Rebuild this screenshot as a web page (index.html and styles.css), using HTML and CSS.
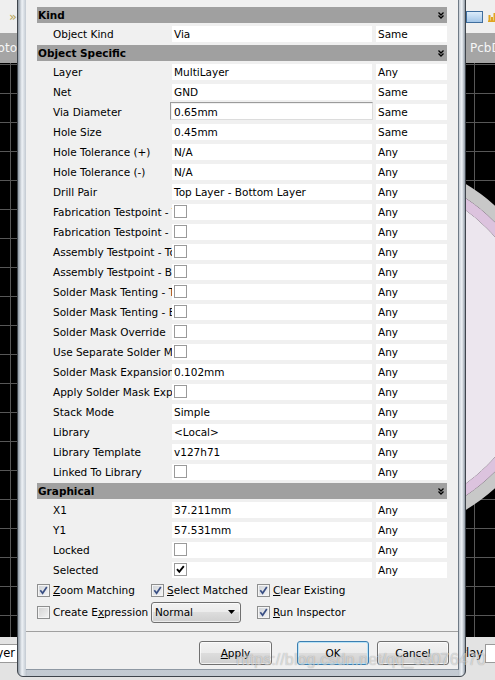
FILE: index.html
```html
<!DOCTYPE html>
<html>
<head>
<meta charset="utf-8">
<title>Via properties</title>
<link rel="stylesheet" href="styles.css">
</head>
<body>
<div class="desktop">
  <div class="app">
    <div class="toolbar">
      <span class="tb-more">»</span>
      <span class="tb-right">
        <span class="tb-btn"></span>
        <svg class="tb-grid" width="10" height="10" viewBox="0 0 10 10"><path d="M0 9.5H10M1.5 9V3M4 9V5M6.5 9V1M9 9V4" stroke="#e0a420" stroke-width="2" fill="none"/></svg>
      </span>
    </div>
    <div class="tabbar">
      <div class="tab-left"><span>Photo</span></div>
      <span class="tab-right">PcbDoc</span>
    </div>
    <div class="canvas">
      <svg class="ring" width="30" height="574" viewBox="0 0 30 574">
        <circle cx="-97" cy="284" r="184" fill="none" stroke="#c8c8c8" stroke-width="12"/>
        <circle cx="-97" cy="284" r="173" fill="none" stroke="#dcc3de" stroke-width="10"/>
        <circle cx="-97" cy="284" r="168" fill="#ece6ee"/>
      </svg>
    </div>
    <div class="statusbar">
      <div class="st-left"><span class="st-tab">Layer</span></div>
      <div class="st-right"><span class="st-text">Overlay</span><span class="st-tab2"></span></div>
    </div>
  </div>

  <div class="dialog">
    <div class="client">
      <div class="props">
        <div class="hdr hdr-first"><span>Kind</span><svg class="chev" width="6" height="7" viewBox="0 0 6 7"><path d="M0.5 0.5L3 3L5.5 0.5M0.5 3.5L3 6L5.5 3.5" fill="none" stroke="#000" stroke-width="1.3"/></svg></div>
        <div class="row"><span class="nm">Object Kind</span><span class="val">Via</span><span class="cmp">Same</span></div>
        <div class="hdr"><span>Object Specific</span><svg class="chev" width="6" height="7" viewBox="0 0 6 7"><path d="M0.5 0.5L3 3L5.5 0.5M0.5 3.5L3 6L5.5 3.5" fill="none" stroke="#000" stroke-width="1.3"/></svg></div>
        <div class="row"><span class="nm">Layer</span><span class="val">MultiLayer</span><span class="cmp">Any</span></div>
        <div class="row"><span class="nm">Net</span><span class="val">GND</span><span class="cmp">Same</span></div>
        <div class="row"><span class="nm">Via Diameter</span><span class="val edit">0.65mm</span><span class="cmp">Same</span></div>
        <div class="row"><span class="nm">Hole Size</span><span class="val">0.45mm</span><span class="cmp">Same</span></div>
        <div class="row"><span class="nm">Hole Tolerance (+)</span><span class="val">N/A</span><span class="cmp">Any</span></div>
        <div class="row"><span class="nm">Hole Tolerance (-)</span><span class="val">N/A</span><span class="cmp">Any</span></div>
        <div class="row"><span class="nm">Drill Pair</span><span class="val">Top Layer - Bottom Layer</span><span class="cmp">Any</span></div>
        <div class="row"><span class="nm">Fabrication Testpoint - Top</span><span class="val ck"><span class="gcb"></span></span><span class="cmp">Any</span></div>
        <div class="row"><span class="nm">Fabrication Testpoint - Bottom</span><span class="val ck"><span class="gcb"></span></span><span class="cmp">Any</span></div>
        <div class="row"><span class="nm">Assembly Testpoint - Top</span><span class="val ck"><span class="gcb"></span></span><span class="cmp">Any</span></div>
        <div class="row"><span class="nm">Assembly Testpoint - Bottom</span><span class="val ck"><span class="gcb"></span></span><span class="cmp">Any</span></div>
        <div class="row"><span class="nm">Solder Mask Tenting - Top</span><span class="val ck"><span class="gcb"></span></span><span class="cmp">Any</span></div>
        <div class="row"><span class="nm">Solder Mask Tenting - Bottom</span><span class="val ck"><span class="gcb"></span></span><span class="cmp">Any</span></div>
        <div class="row"><span class="nm">Solder Mask Override</span><span class="val ck"><span class="gcb"></span></span><span class="cmp">Any</span></div>
        <div class="row"><span class="nm">Use Separate Solder Mask Expansion</span><span class="val ck"><span class="gcb"></span></span><span class="cmp">Any</span></div>
        <div class="row"><span class="nm">Solder Mask Expansion</span><span class="val">0.102mm</span><span class="cmp">Any</span></div>
        <div class="row"><span class="nm">Apply Solder Mask Expansion</span><span class="val ck"><span class="gcb"></span></span><span class="cmp">Any</span></div>
        <div class="row"><span class="nm">Stack Mode</span><span class="val">Simple</span><span class="cmp">Any</span></div>
        <div class="row"><span class="nm">Library</span><span class="val">&lt;Local&gt;</span><span class="cmp">Any</span></div>
        <div class="row"><span class="nm">Library Template</span><span class="val">v127h71</span><span class="cmp">Any</span></div>
        <div class="row"><span class="nm">Linked To Library</span><span class="val ck"><span class="gcb"></span></span><span class="cmp">Any</span></div>
        <div class="hdr"><span>Graphical</span><svg class="chev" width="6" height="7" viewBox="0 0 6 7"><path d="M0.5 0.5L3 3L5.5 0.5M0.5 3.5L3 6L5.5 3.5" fill="none" stroke="#000" stroke-width="1.3"/></svg></div>
        <div class="row"><span class="nm">X1</span><span class="val">37.211mm</span><span class="cmp">Any</span></div>
        <div class="row"><span class="nm">Y1</span><span class="val">57.531mm</span><span class="cmp">Any</span></div>
        <div class="row"><span class="nm">Locked</span><span class="val ck"><span class="gcb"></span></span><span class="cmp">Any</span></div>
        <div class="row"><span class="nm">Selected</span><span class="val ck"><span class="gcb"><svg width="11" height="11" viewBox="0 0 11 11"><path d="M2 5.2L4.3 7.8L8.8 2.2" fill="none" stroke="#000" stroke-width="1.9"/></svg></span></span><span class="cmp">Any</span></div>
      </div>

      <div class="opts">
        <label class="opt"><span class="cbx"><svg width="11" height="11" viewBox="0 0 11 11"><path d="M2.3 5.3L4.6 8.2L8.8 2" fill="none" stroke="#3a4f84" stroke-width="1.7"/></svg></span><span><u>Z</u>oom Matching</span></label>
        <label class="opt"><span class="cbx"><svg width="11" height="11" viewBox="0 0 11 11"><path d="M2.3 5.3L4.6 8.2L8.8 2" fill="none" stroke="#3a4f84" stroke-width="1.7"/></svg></span><span><u>S</u>elect Matched</span></label>
        <label class="opt"><span class="cbx"><svg width="11" height="11" viewBox="0 0 11 11"><path d="M2.3 5.3L4.6 8.2L8.8 2" fill="none" stroke="#3a4f84" stroke-width="1.7"/></svg></span><span><u>C</u>lear Existing</span></label>
        <label class="opt"><span class="cbx off"></span><span>Create E<u>x</u>pression</span></label>
        <div class="dd"><span>Normal</span><svg width="7" height="4" viewBox="0 0 7 4"><path d="M0 0H7L3.5 4Z" fill="#000"/></svg></div>
        <label class="opt"><span class="cbx"><svg width="11" height="11" viewBox="0 0 11 11"><path d="M2.3 5.3L4.6 8.2L8.8 2" fill="none" stroke="#3a4f84" stroke-width="1.7"/></svg></span><span><u>R</u>un Inspector</span></label>
      </div>

      <div class="sep"></div>

      <div class="btns">
        <span class="btn btn-apply"><u>A</u>pply</span>
        <span class="btn btn-default">OK</span>
        <span class="btn">Cancel</span>
      </div>
    </div>
  </div>

  <div class="watermark">https://blog.csdn.net/qq_53076470</div>
</div>
</body>
</html>
```

FILE: styles.css
```css
* { box-sizing: border-box; }
html, body { margin: 0; padding: 0; }
body {
  width: 495px;
  height: 680px;
  overflow: hidden;
  font-family: "DejaVu Sans", "Liberation Sans", sans-serif;
  font-size: 10.5px;
  color: #000;
  background: #000;
}
.desktop { position: relative; width: 495px; height: 680px; overflow: hidden; }

/* ---------- application behind the dialog ---------- */
.app { display: flex; flex-direction: column; height: 100%; }
.toolbar {
  height: 33px;
  background: #efefef;
  display: flex;
  align-items: center;
  justify-content: space-between;
}
.tb-more { margin-left: 9px; color: #b8a65a; font-size: 13px; }
.tb-right { display: flex; align-items: center; gap: 5px; margin-right: -3px; }
.tb-btn {
  width: 17px; height: 12px;
  border: 1px solid #3f6e9e;
  background: linear-gradient(#dcecfa, #a3c6e8);
}
.tabbar {
  height: 30px;
  background: #a5a5a5;
  color: #f6f6f6;
  font-size: 12px;
  display: flex;
  align-items: center;
  justify-content: space-between;
}
.tab-left { width: 17px; display: flex; justify-content: flex-end; overflow: hidden; white-space: nowrap; }
.tab-right { width: 27px; overflow: hidden; white-space: nowrap; padding-left: 2px; }
.canvas {
  flex: 1;
  position: relative;
  overflow: hidden;
  background-color: #000;
  background-image:
    linear-gradient(to right, #575757 1px, transparent 1px),
    linear-gradient(#575757 1px, transparent 1px);
  background-size: 29px 29px;
  background-position: 10px 1px;
}
.ring {
  position: absolute;
  left: 465px;
  top: 0;
  display: block;
}
.statusbar {
  height: 43px;
  background: #e3e3e3;
  display: flex;
  justify-content: space-between;
  align-items: flex-start;
  padding-top: 7px;
  font-size: 11.5px;
}
.st-left { width: 18px; display: flex; justify-content: flex-end; overflow: hidden; }
.st-tab { background: #fff; border: 1px solid #9a9a9a; border-left: 0; padding: 1px 2px 0 0; height: 19px; white-space: nowrap; }
.st-right { display: flex; align-items: flex-start; }
.st-text { padding: 2px 2px 0 0; }
.st-tab2 { width: 10px; height: 19px; background: #fff; border: 1px solid #9a9a9a; border-right: 0; }

/* ---------- dialog window ---------- */
.dialog {
  position: absolute;
  left: 17px;
  top: -1px;
  width: 449px;
  height: 678px;
  border: 1px solid #3e444b;
  border-radius: 0 0 6px 6px;
  padding: 0 6px 6px 8px;
  background:
    linear-gradient(to right, #8f99a4, #eef2f6 45%, #b7bfc8) left top / 9px 100% no-repeat,
    linear-gradient(to right, #b7bfc8, #eef2f6 55%, #8f99a4) right top / 7px 100% no-repeat,
    linear-gradient(#cfd5dc, #e4e8ec 60%, #c3cad2);
}
.client {
  height: 670px;
  background: #f0f0f0;
  border-right: 1px solid #6f7a86;
  border-bottom: 1px solid #8e98a3;
  padding: 7px 11px 0 11px;
  display: flex;
  flex-direction: column;
}

/* property grid */
.props { display: flex; flex-direction: column; gap: 4px; }
.hdr {
  height: 16px;
  margin: -1px 0;
  background: #a0a0a0;
  font-weight: bold;
  display: flex;
  align-items: center;
  justify-content: space-between;
  padding: 0 3px 0 1px;
}
.hdr-first { margin-top: 0; }
.chev { display: block; }
.row { display: flex; height: 16px; line-height: 16px; }
.nm { width: 135px; padding-left: 16px; white-space: nowrap; overflow: hidden; }
.val { width: 200px; background: #fff; padding-left: 2px; white-space: nowrap; overflow: hidden; }
.cmp { width: 71px; margin-left: 4px; background: #fff; padding-left: 2px; }
.val.ck { padding-top: 1px; }
.val.edit { position: relative; overflow: visible; }
.val.edit::before {
  content: "";
  position: absolute;
  top: -2px; left: -2px; right: -1px; bottom: 0;
  border-top: 1px solid #9b9b9b;
  border-left: 1px solid #9b9b9b;
  border-right: 1px solid #dcdcdc;
  border-bottom: 1px solid #dcdcdc;
}
.gcb {
  display: flex;
  align-items: center;
  justify-content: center;
  width: 13px;
  height: 13px;
  border: 1px solid #9a9a9a;
  background: #fff;
}

/* options */
.opts {
  display: grid;
  grid-template-columns: 114px 106px 1fr;
  grid-auto-rows: 22px;
  align-items: center;
  margin-top: 1px;
}
.opt { display: flex; align-items: center; gap: 3px; white-space: nowrap; }
.cbx {
  display: flex;
  align-items: center;
  justify-content: center;
  width: 13px;
  height: 13px;
  border: 1px solid #8e8f8f;
  background: linear-gradient(135deg, #cdd1d6, #f7f7f7);
  box-shadow: inset 0 0 0 1px #f4f4f4;
}
.cbx.off { background: linear-gradient(135deg, #d2d2d2, #f4f4f4); }
.dd {
  width: 90px;
  height: 21px;
  border: 1px solid #707070;
  border-radius: 3px;
  background: linear-gradient(#f2f2f2 0, #ebebeb 50%, #dddddd 50%, #cfcfcf 100%);
  box-shadow: inset 0 0 0 1px rgba(255, 255, 255, 0.6);
  display: flex;
  align-items: center;
  justify-content: space-between;
  padding: 0 5px 0 3px;
}

.sep { margin: 8px -11px 0; border-top: 1px solid #a0a0a0; }

.btns {
  display: flex;
  justify-content: flex-end;
  gap: 8px;
  padding-top: 9px;
  margin-right: -2px;
}
.btn {
  width: 72px;
  height: 24px;
  border: 1px solid #707070;
  border-radius: 3px;
  background: linear-gradient(#f2f2f2 0, #ebebeb 50%, #dddddd 50%, #cfcfcf 100%);
  box-shadow: inset 0 0 0 1px rgba(255, 255, 255, 0.7);
  display: flex;
  align-items: center;
  justify-content: center;
}
.btn-apply { width: 73px; margin-right: 17px; }
.btn-default {
  border-color: #3c7fb1;
  box-shadow: inset 0 0 0 1px #b9e3f7;
}

.watermark {
  position: absolute;
  left: 236px;
  top: 650px;
  font-family: "Liberation Sans", sans-serif;
  font-size: 16.3px;
  white-space: nowrap;
  color: rgba(255, 255, 255, 0.55);
  text-shadow: 0 0 1px rgba(0, 0, 0, 0.35);
}
```
